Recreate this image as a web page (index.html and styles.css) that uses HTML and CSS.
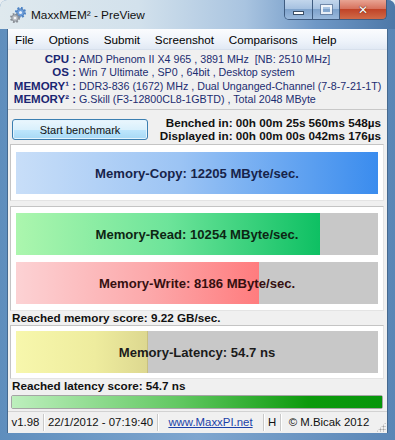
FILE: index.html
```html
<!DOCTYPE html>
<html lang="en">
<head>
  <meta charset="UTF-8" />
  <title>MaxxMEM² - PreView</title>
  <link rel="stylesheet" href="styles.css">
</head>
<body>
  <div class="window">
    <div class="titlebar">
      <svg class="app-icon" width="16" height="16" viewBox="0 0 16 16">
        <g transform="translate(10.5 5.5)">
          <circle r="4.6" fill="none" stroke="#4f86c8" stroke-width="2" stroke-dasharray="1.9 1.7"/>
          <circle r="3.8" fill="#6d9fdc" stroke="#3a6aa8" stroke-width="0.6"/>
          <circle r="1.5" fill="#e8f0fa"/>
        </g>
        <g transform="translate(5 11)">
          <circle r="4.1" fill="none" stroke="#8a8f96" stroke-width="1.8" stroke-dasharray="1.7 1.6"/>
          <circle r="3.3" fill="#b9bec4" stroke="#6f747a" stroke-width="0.6"/>
          <circle r="1.3" fill="#f4f4f4"/>
        </g>
      </svg>
      <span class="title">MaxxMEM² - PreView</span>
      <div class="caption-buttons">
        <span class="cap cap-min"><i></i></span>
        <span class="cap cap-max"><i></i></span>
        <span class="cap cap-close">✕</span>
      </div>
    </div>

    <div class="client">
      <nav class="menubar">
        <span>File</span>
        <span>Options</span>
        <span>Submit</span>
        <span>Screenshot</span>
        <span>Comparisons</span>
        <span>Help</span>
      </nav>

      <div class="info">
        <span class="label">CPU :</span>
        <span class="value">AMD Phenom II X4 965 , 3891 MHz&nbsp; [NB: 2510 MHz]</span>
        <span class="label">OS :</span>
        <span class="value">Win 7 Ultimate , SP0 , 64bit , Desktop system</span>
        <span class="label">MEMORY¹ :</span>
        <span class="value">DDR3-836 (1672) MHz , Dual Unganged-Channel (7-8-7-21-1T)</span>
        <span class="label">MEMORY² :</span>
        <span class="value">G.Skill (F3-12800CL8-1GBTD) , Total 2048 MByte</span>
      </div>

      <div class="bench-row">
        <button class="start-btn">Start benchmark</button>
        <div class="times">
          <div>Benched in: 00h 00m 25s 560ms 548µs</div>
          <div>Displayed in: 00h 00m 00s 042ms 176µs</div>
        </div>
      </div>

      <div class="panel">
        <div class="bar">
          <div class="fill fill-copy" style="width: 100%"></div>
          <span class="bar-text text-copy">Memory-Copy: 12205 MByte/sec.</span>
        </div>
      </div>

      <div class="panel panel-rw">
        <div class="bar">
          <div class="fill fill-read" style="width: 84%"></div>
          <span class="bar-text text-read">Memory-Read: 10254 MByte/sec.</span>
        </div>
        <div class="bar">
          <div class="fill fill-write" style="width: 67%"></div>
          <span class="bar-text text-write">Memory-Write: 8186 MByte/sec.</span>
        </div>
      </div>

      <div class="score">Reached memory score: 9.22 GB/sec.</div>

      <div class="panel panel-lat">
        <div class="bar">
          <div class="fill fill-lat" style="width: 36.3%"></div>
          <span class="bar-text">Memory-Latency: 54.7 ns</span>
        </div>
      </div>

      <div class="score">Reached latency score: 54.7 ns</div>

      <div class="progress"><div class="progress-fill"></div></div>

      <div class="statusbar">
        <span class="sb-cell sb-ver">v1.98</span>
        <span class="sb-cell sb-date">22/1/2012 - 07:19:40</span>
        <span class="sb-cell sb-link"><a href="#">www.MaxxPI.net</a></span>
        <span class="sb-cell sb-h">H</span>
        <span class="sb-cell sb-copy">© M.Bicak 2012</span>
        <span class="grip"></span>
      </div>
    </div>
  </div>
</body>
</html>
```

FILE: styles.css
```css
body {
  margin: 0;
  background-color: #e9eef2;
  font-family: "Liberation Sans", Arial, sans-serif;
}
.window {
  width: 395px;
  height: 440px;
  display: flex;
  flex-direction: column;
  border-radius: 7px 7px 0 0;
  overflow: hidden;
  background: linear-gradient(90deg, #5f8ebd 0%, #7fa6cf 50%, #5a86b6 100%);
}
.titlebar {
  height: 29px;
  display: flex;
  align-items: flex-start;
  background: linear-gradient(90deg, #dfe9ee 0%, #d2e1ec 35%, #a9c4e0 62%, #6f98c6 80%, #4d78a8 100%);
}
.app-icon {
  margin: 7px 0 0 10px;
}
.title {
  margin: 8px 0 0 5px;
  font-size: 11.8px;
  color: #111;
}
.caption-buttons {
  margin-left: auto;
  margin-right: 8px;
  display: flex;
  height: 19px;
  border: 1px solid #3f5c80;
  border-top: none;
  border-radius: 0 0 5px 5px;
  overflow: hidden;
}
.cap {
  display: flex;
  align-items: center;
  justify-content: center;
  height: 19px;
  background: linear-gradient(#c2d6ec 0%, #a7c2e1 45%, #7fa3cc 50%, #9ab9dc 100%);
}
.cap-min {
  width: 27px;
  border-right: 1px solid #3f5c80;
}
.cap-min i {
  width: 9px;
  height: 2px;
  margin-top: 6px;
  background: #fff;
  border: 1px solid #3a4e66;
}
.cap-max {
  width: 26px;
  border-right: 1px solid #3f5c80;
}
.cap-max i {
  width: 7px;
  height: 5px;
  border: 2px solid #fff;
  outline: 1px solid #61799a;
  opacity: 0.8;
}
.cap-close {
  width: 46px;
  background: linear-gradient(#e8a493 0%, #d7735e 45%, #c14428 50%, #d06a48 100%);
  color: #fff;
  font-family: "DejaVu Sans", sans-serif;
  font-weight: bold;
  font-size: 12px;
  text-shadow: 0 0 1px #5a1a10, 0 0 1px #5a1a10;
}
.client {
  flex: 1;
  margin: 0 7px 7px 7px;
  background-color: #f0f0f0;
  display: flex;
  flex-direction: column;
  border-left: 1px solid #45698f;
  border-right: 1px solid #45698f;
}
.menubar {
  height: 20px;
  display: flex;
  align-items: center;
  background: linear-gradient(#fbfcfe 0%, #eef3fa 60%, #e1e9f4 100%);
  border-bottom: 1px solid #d7e0ec;
  font-size: 11.7px;
  color: #000;
}
.menubar span {
  padding: 0 7.4px;
}
.menubar span:first-child {
  padding-left: 7px;
}
.info {
  display: grid;
  grid-template-columns: 68px 1fr;
  column-gap: 3px;
  padding-top: 3px;
  line-height: 13.3px;
  font-size: 10.7px;
  color: #1c2d70;
}
.label {
  text-align: right;
  font-weight: bold;
  font-size: 11.5px;
  color: #1a2672;
}
.value {
  white-space: nowrap;
}
.bench-row {
  margin-top: 3px;
  padding-top: 8px;
  border-top: 1px solid #c8c8c8;
  display: flex;
  align-items: flex-start;
  justify-content: space-between;
  height: 26px;
}
.start-btn {
  margin: 1px 0 0 4px;
  width: 136px;
  height: 21px;
  border: 1px solid #3c7fb1;
  border-radius: 3px;
  background: linear-gradient(#eaf6fd 0%, #d9f0fc 50%, #bee6fd 52%, #a7d9f5 100%);
  font-family: "Liberation Sans", Arial, sans-serif;
  font-size: 11px;
  color: #111;
  padding: 0;
  box-shadow: inset 0 0 0 1px #e4f4fd;
}
.times {
  margin-top: -2px;
  padding-right: 6px;
  text-align: right;
  font-weight: bold;
  font-size: 11.7px;
  line-height: 13px;
  color: #111;
}
.panel {
  margin: 0 3px 0 2px;
  padding: 7px 5px 6px 5px;
  background: #fff;
  border: 1px solid #c4c4c4;
  border-right-color: #e4e4e4;
  border-bottom-color: #e4e4e4;
  display: flex;
  flex-direction: column;
  gap: 7px;
}
.panel-rw {
  margin-top: 5px;
  padding-top: 6px;
}
.panel-lat {
  padding-top: 5px;
  padding-bottom: 5px;
}
.bar {
  position: relative;
  height: 42px;
  background: #c8c8c8;
  display: flex;
  align-items: center;
  justify-content: center;
}
.fill {
  position: absolute;
  left: 0;
  top: 0;
  bottom: 0;
}
.fill-copy {
  background: linear-gradient(90deg, #c8def8 0%, #9cc4f4 45%, #3a8cee 100%);
}
.fill-read {
  background: linear-gradient(90deg, #acf6ae 0%, #6de49a 50%, #0ec063 100%);
}
.fill-write {
  background: linear-gradient(90deg, #fcd2d4 0%, #fca8aa 55%, #ff7c7e 100%);
}
.fill-lat {
  background: linear-gradient(90deg, #f7f7ac 0%, #eeec9e 60%, #ddd890 100%);
  border-right: 1px solid #c8c080;
}
.bar-text {
  position: relative;
  font-weight: bold;
  font-size: 13.1px;
  color: #1b1b1b;
}
.text-copy {
  color: #17244a;
}
.text-read {
  color: #0d2614;
}
.text-write {
  color: #361010;
}
.score {
  padding-left: 4px;
  font-weight: bold;
  font-size: 11.7px;
  line-height: 13px;
  height: 14px;
  color: #111;
}
.progress {
  margin: 2px 4px 0 3px;
  height: 12px;
  border: 1px solid #a5a5a5;
  border-radius: 2px;
  background: #e6e6e6;
}
.progress-fill {
  height: 100%;
  background: linear-gradient(90deg, #bdefbd 0%, #62c862 45%, #0c9a0c 80%, #06960a 100%);
}
.statusbar {
  margin-top: auto;
  height: 21px;
  display: flex;
  align-items: center;
  border-top: 1px solid #d2d2d2;
  font-size: 11.4px;
  color: #111;
  position: relative;
}
.sb-cell {
  height: 17px;
  line-height: 17px;
  text-align: center;
  border-right: 1px solid #c9c9c9;
  box-shadow: 1px 0 0 #fff;
}
.sb-ver { width: 35px; }
.sb-date { width: 113px; }
.sb-link { width: 105px; }
.sb-h { width: 16px; }
.sb-copy {
  width: 96px;
  border-right: none;
  box-shadow: none;
}
.sb-link a {
  color: #1a3fa8;
  text-decoration: underline;
}
.grip {
  position: absolute;
  right: 1px;
  bottom: 1px;
  width: 10px;
  height: 10px;
  background: radial-gradient(circle, #a0a0a0 0.8px, transparent 1.2px) 0 0 / 3px 3px;
  clip-path: polygon(100% 0, 100% 100%, 0 100%);
}
```
